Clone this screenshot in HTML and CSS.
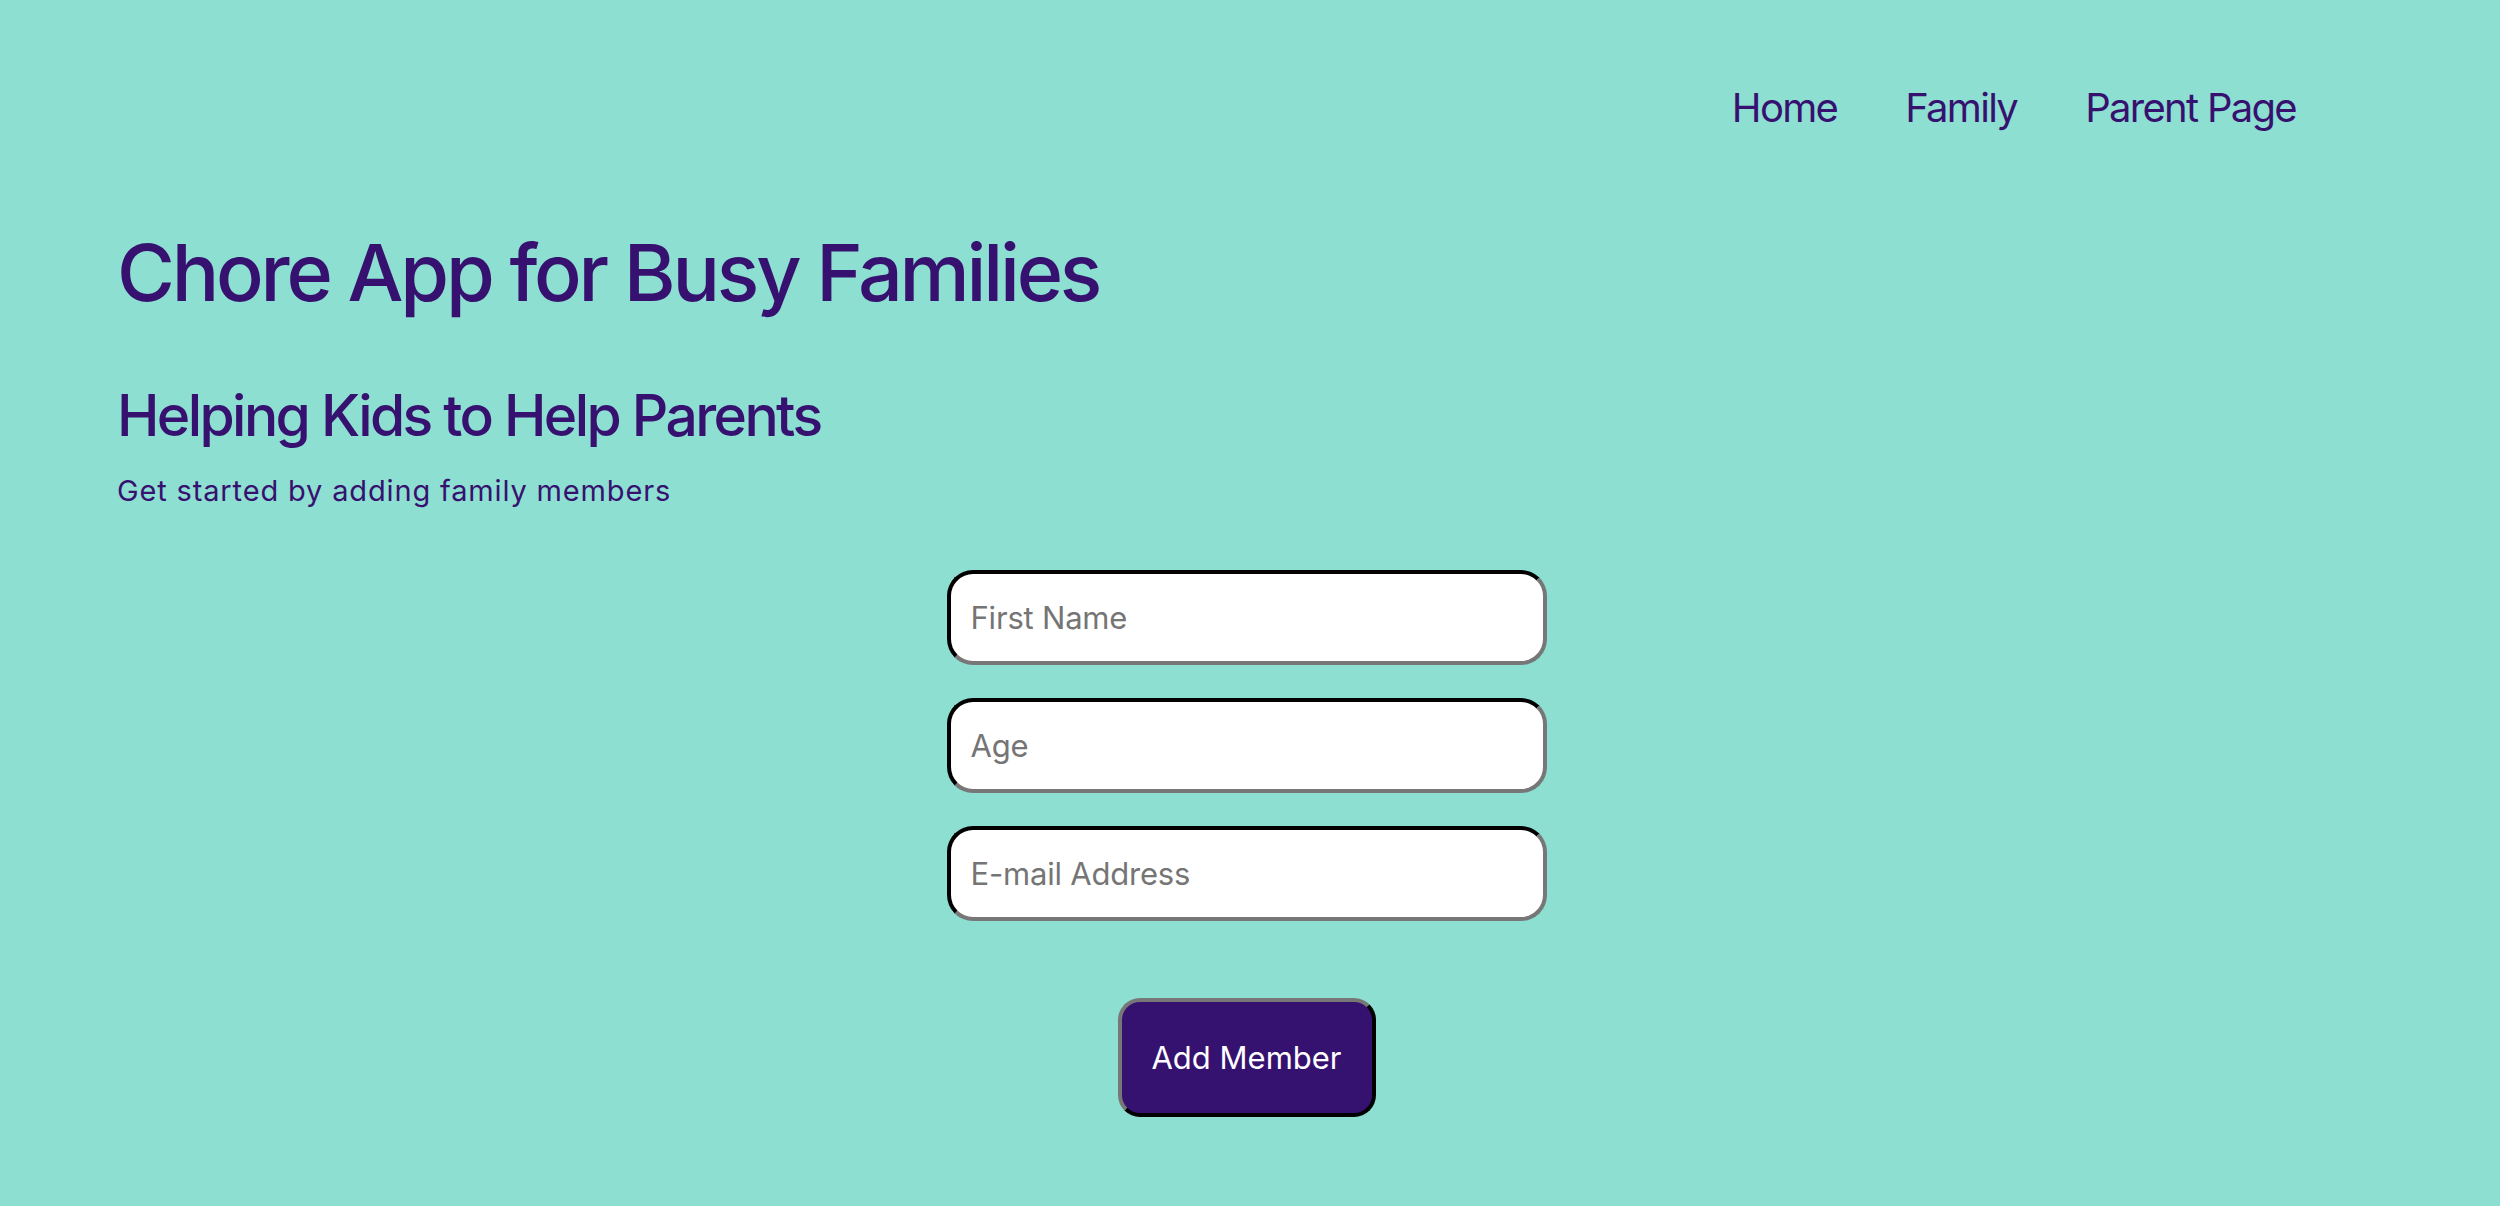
FILE: index.html
```html
<!DOCTYPE html>
<html lang="en">
<head>
<meta charset="utf-8">
<title>Chore App for Busy Families</title>
<link rel="stylesheet" href="styles.css">
</head>
<body>
  <header class="topbar">
    <nav class="nav">
      <a class="nav-link" href="#">Home</a>
      <a class="nav-link" href="#">Family</a>
      <a class="nav-link" href="#">Parent Page</a>
    </nav>
  </header>
  <main class="main">
    <h1 class="title">Chore App for Busy Families</h1>
    <h2 class="subtitle">Helping Kids to Help Parents</h2>
    <p class="lead">Get started by adding family members</p>
    <form class="member-form">
      <input class="field" type="text" placeholder="First Name">
      <input class="field" type="text" placeholder="Age">
      <input class="field" type="text" placeholder="E-mail Address">
      <button class="add-btn" type="button">Add Member</button>
    </form>
  </main>
</body>
</html>
```

FILE: styles.css
```css
* {
  box-sizing: border-box;
}

html, body {
  margin: 0;
  padding: 0;
}

body {
  background: #8ddfd1;
  color: #37116f;
  font-family: Inter, "Noto Sans", sans-serif;
  min-height: 1206px;
}

.topbar {
  display: flex;
  justify-content: flex-end;
  padding: 84px 204px 0 0;
}

.nav {
  display: flex;
  gap: 68px;
}

.nav-link {
  color: #37116f;
  text-decoration: none;
  font-size: 40px;
  line-height: 48px;
  font-weight: 400;
  letter-spacing: -1.7px;
}

.main {
  padding: 92px 0 0 117px;
  display: flex;
  flex-direction: column;
}

.title {
  margin: 0;
  font-size: 79px;
  line-height: 96px;
  font-weight: 500;
  letter-spacing: -3.2px;
}

.subtitle {
  margin: 62px 0 0 0;
  font-size: 57px;
  line-height: 68px;
  font-weight: 500;
  letter-spacing: -2.6px;
}

.lead {
  margin: 23px 0 0 0;
  font-size: 29px;
  line-height: 35px;
  font-weight: 400;
  letter-spacing: 0.85px;
}

.member-form {
  margin: 62px 0 0 -117px;
  padding-right: 7px;
  display: flex;
  flex-direction: column;
  align-items: center;
  gap: 33px;
}

.field {
  width: 600px;
  height: 95px;
  border: 4px inset #777;
  border-color: #222 #777 #777 #222;
  border-radius: 26px;
  background: #fff;
  padding: 0 20px;
  font-family: Inter, "Noto Sans", sans-serif;
  font-size: 31px;
  letter-spacing: -0.2px;
  color: #222;
  outline: none;
}

.field::placeholder {
  color: #757575;
}

.add-btn {
  margin-top: 44px;
  width: 258px;
  height: 119px;
  border: 4px outset #777;
  border-color: #777 #222 #222 #777;
  border-radius: 22px;
  background: #35126f;
  color: #fff;
  font-family: Inter, "Noto Sans", sans-serif;
  font-size: 31px;
  font-weight: 400;
  padding: 0;
}
```
